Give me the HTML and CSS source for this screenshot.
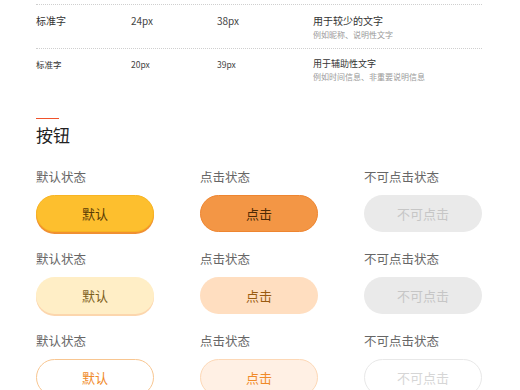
FILE: index.html
```html
<!DOCTYPE html>
<html lang="zh-CN">
<head>
    <meta charset="UTF-8">
    <meta name="viewport" content="width=device-width, initial-scale=1.0">
    <title>规范 - 按钮</title>
    <link rel="stylesheet" href="styles.css">
</head>
<body>
    <div class="font-table">
        <div class="font-row">
            <div class="col-name">标准字</div>
            <div class="col-size">24px</div>
            <div class="col-line">38px</div>
            <div class="col-use">
                <p class="use-main">用于较少的文字</p>
                <p class="use-sub">例如昵称、说明性文字</p>
            </div>
        </div>
        <div class="font-row small">
            <div class="col-name">标准字</div>
            <div class="col-size">20px</div>
            <div class="col-line">39px</div>
            <div class="col-use">
                <p class="use-main">用于辅助性文字</p>
                <p class="use-sub">例如时间信息、非重要说明信息</p>
            </div>
        </div>
    </div>

    <div class="section">
        <div class="section-mark"></div>
        <h2>按钮</h2>

        <div class="btn-grid">
            <div class="cell">
                <div class="label">默认状态</div>
                <div class="btn solid-normal">默认</div>
            </div>
            <div class="cell">
                <div class="label">点击状态</div>
                <div class="btn solid-active">点击</div>
            </div>
            <div class="cell">
                <div class="label">不可点击状态</div>
                <div class="btn solid-disabled">不可点击</div>
            </div>

            <div class="cell">
                <div class="label">默认状态</div>
                <div class="btn light-normal">默认</div>
            </div>
            <div class="cell">
                <div class="label">点击状态</div>
                <div class="btn light-active">点击</div>
            </div>
            <div class="cell">
                <div class="label">不可点击状态</div>
                <div class="btn light-disabled">不可点击</div>
            </div>

            <div class="cell">
                <div class="label">默认状态</div>
                <div class="btn line-normal">默认</div>
            </div>
            <div class="cell">
                <div class="label">点击状态</div>
                <div class="btn line-active">点击</div>
            </div>
            <div class="cell">
                <div class="label">不可点击状态</div>
                <div class="btn line-disabled">不可点击</div>
            </div>
        </div>
    </div>
</body>
</html>
```

FILE: styles.css
```css
body {
    font-family: "Noto Sans CJK SC", "Liberation Sans", sans-serif;
    margin: 0;
    padding: 4px 38px 0 36px;
    background: #fff;
    color: #333;
}

p {
    margin: 0;
}

.font-row {
    box-sizing: border-box;
    display: flex;
    border-top: 1px dotted #cfcfcf;
    height: 44px;
    padding-top: 9px;
    font-size: 10px;
    color: #333;
}

.font-row.small {
    font-size: 8.5px;
    padding-top: 8px;
}

.col-name {
    width: 95px;
    line-height: 14px;
}

.col-size {
    width: 86px;
    line-height: 14px;
    color: #444;
}

.col-line {
    width: 96px;
    line-height: 14px;
    color: #444;
}

.use-main {
    line-height: 14px;
}

.use-sub {
    font-size: 8px;
    line-height: 13px;
    color: #999;
}

.font-row.small .use-main {
    font-size: 9px;
}

.font-row.small .use-sub {
    line-height: 11px;
}

.section {
    padding-top: 26px;
}

.section-mark {
    width: 23px;
    height: 1px;
    background: #f0522b;
}

h2 {
    margin: 4px 0 0;
    font-size: 17px;
    font-weight: normal;
    line-height: 24px;
    color: #222;
}

.btn-grid {
    display: grid;
    grid-template-columns: repeat(3, 118px);
    column-gap: 46px;
    row-gap: 18px;
    margin-top: 21px;
}

.label {
    font-size: 12.5px;
    line-height: 18px;
    color: #666;
    margin-bottom: 9px;
}

.btn {
    box-sizing: border-box;
    height: 37px;
    line-height: 35px;
    border-radius: 19px;
    border: 1px solid transparent;
    text-align: center;
    font-size: 13px;
}

.solid-normal {
    background: #fdbf2e;
    border-color: #f8b422;
    box-shadow: 0 2px 0 #f09032;
    color: #5a3b05;
}

.solid-active {
    background: #f39645;
    border-color: #ee8530;
    color: #4d2a05;
}

.solid-disabled {
    background: #eaeaea;
    color: #c6c6c6;
}

.light-normal {
    background: #ffeec6;
    box-shadow: 0 2px 0 #fcd6ad;
    color: #7d5f1c;
}

.light-active {
    background: #ffdec0;
    color: #9a5a10;
}

.light-disabled {
    background: #eaeaea;
    color: #c6c6c6;
}

.line-normal {
    background: #fff;
    border-color: #f8c691;
    color: #f08a28;
}

.line-active {
    background: #fff0e4;
    border-color: #fdd8b6;
    color: #f08a28;
}

.line-disabled {
    background: #fff;
    border-color: #e8e8e8;
    color: #d6d6d6;
}
```
